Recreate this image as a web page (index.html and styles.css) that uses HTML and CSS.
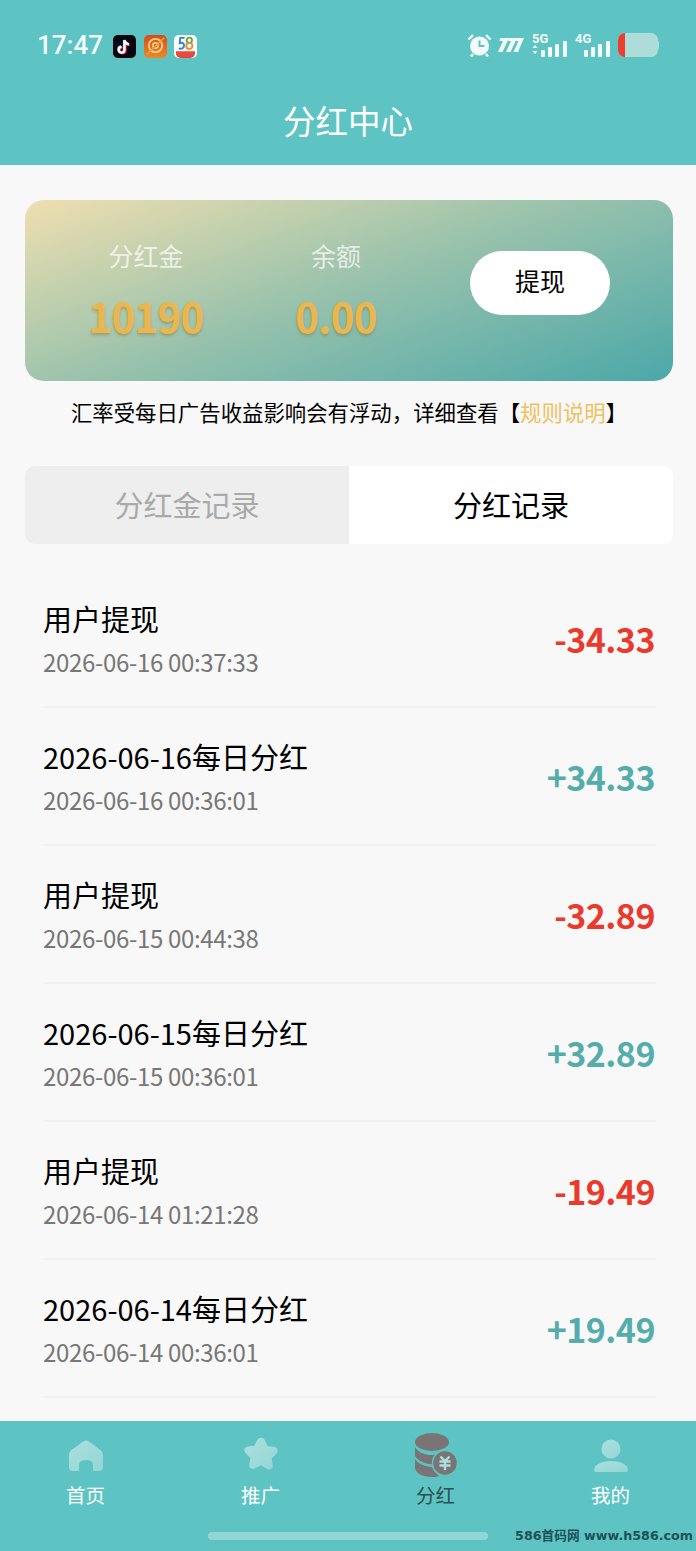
FILE: index.html
```html
<!DOCTYPE html>
<html lang="zh">
<head>
<meta charset="utf-8">
<title>分红中心</title>
<link rel="stylesheet" href="styles.css">
</head>
<body>
<div class="app">
  <header class="header">
    <div class="status">
      <span class="time">17:47</span>
      <div class="apps">
        <svg class="app-icon" viewBox="0 0 24 24"><rect width="24" height="24" rx="5" fill="#06060f"/><path d="M12 5.500v10a3 3 0 1 1-3-3M12 5.500c.4 2.600 2 4 4.500 4.300" fill="none" stroke="#ee1d52" stroke-width="2.600" transform="translate(1 .6)"/><path d="M12 5.500v10a3 3 0 1 1-3-3M12 5.500c.4 2.600 2 4 4.500 4.300" fill="none" stroke="#69c9d0" stroke-width="2.600" transform="translate(-.4 -.4)"/><path d="M12 5.500v10a3 3 0 1 1-3-3M12 5.500c.4 2.600 2 4 4.500 4.300" fill="none" stroke="#fff" stroke-width="2.300"/></svg>
        <svg class="app-icon" viewBox="0 0 24 24"><defs><linearGradient id="orange" x1="0" y1="0" x2="0" y2="1"><stop offset="0" stop-color="#d84a20"/><stop offset="1" stop-color="#e98a28"/></linearGradient></defs><rect width="24" height="24" rx="5" fill="url(#orange)"/><circle cx="12" cy="11" r="7" fill="none" stroke="#f6cf86" stroke-width="2"/><circle cx="12" cy="11" r="2.800" fill="none" stroke="#f6cf86" stroke-width="1.600"/><path d="M3 20 21 3" stroke="#e8a33a" stroke-width="1.500"/></svg>
        <svg class="app-icon" viewBox="0 0 24 24"><rect width="24" height="24" rx="5" fill="#fbfbfb"/><path d="M2 17H22V19A5 5 0 0 1 17 24H7A5 5 0 0 1 2 19Z" fill="#e5493f"/><circle cx="16" cy="5.500" r="2.800" fill="none" stroke="#58ad3c" stroke-width="1.900"/><circle cx="16" cy="11.500" r="3.200" fill="none" stroke="#ef8d2c" stroke-width="1.900"/><path d="M11 3H6.500L6 8.500c2.500-1 4.500 0 4.500 2.500S8 15 5 14" fill="none" stroke="#2a83cf" stroke-width="1.900"/></svg>
      </div>
      <div class="indicators">
        <svg class="alarm" viewBox="0 0 25 24"><circle cx="12.500" cy="13" r="9.500" fill="#f2fbfa"/><path d="M12.500 7.500V13h5" fill="none" stroke="#5ec4c3" stroke-width="2"/><path d="M1.500 6.500 6 2M23.500 6.500 19 2M6 21l-2 2.500M19 21l2 2.500" stroke="#f2fbfa" stroke-width="2.400"/></svg>
        <svg class="hd" viewBox="0 0 27 14"><path d="M3 0h9L5.500 14H1L6 3H2.500ZM12 0H20L13.500 14H9L14 3H11ZM20 0H27L21 14H16.500L21.500 3H19Z" fill="#f2fbfa"/></svg>
        <div class="signal">
          <span class="net">5G</span>
          <svg class="bars" viewBox="0 0 36 16"><path d="M3 4 5.500 7H.5ZM3 13 .5 10h5Z" fill="#f2fbfa"/><rect x="9" y="9" width="4" height="7" rx="1" fill="#f2fbfa"/><rect x="16" y="6" width="4" height="10" rx="1" fill="#f2fbfa"/><rect x="23" y="3" width="4" height="13" rx="1" fill="#f2fbfa"/><rect x="31" y="0" width="4" height="16" rx="1" fill="#f2fbfa"/></svg>
        </div>
        <div class="signal signal-4g">
          <span class="net">4G</span>
          <svg class="bars" viewBox="0 0 36 16"><rect x="9" y="9" width="4" height="7" rx="1" fill="#f2fbfa"/><rect x="16" y="6" width="4" height="10" rx="1" fill="#f2fbfa"/><rect x="23" y="3" width="4" height="13" rx="1" fill="#f2fbfa"/><rect x="31" y="0" width="4" height="16" rx="1" fill="#f2fbfa"/></svg>
        </div>
        <svg class="battery" viewBox="0 0 41 24"><rect x="0" y="0" width="40" height="24" rx="7" fill="#aedcd9"/><rect x="39" y="8" width="2" height="8" rx="1" fill="#aedcd9"/><path d="M7 0V24A7 7 0 0 1 0 17V7A7 7 0 0 1 7 0Z" fill="#ee3d2f"/></svg>
      </div>
    </div>
    <h1 class="title">分红中心</h1>
  </header>

  <main class="content">
    <section class="card">
      <div class="stat stat-bonus">
        <span class="stat-label">分红金</span>
        <span class="stat-value">10190</span>
      </div>
      <div class="stat stat-balance">
        <span class="stat-label">余额</span>
        <span class="stat-value">0.00</span>
      </div>
      <button class="withdraw">提现</button>
    </section>

    <p class="note">汇率受每日广告收益影响会有浮动，详细查看【<span class="note-link">规则说明</span>】</p>

    <div class="tabs">
      <div class="tab tab-off">分红金记录</div>
      <div class="tab tab-on">分红记录</div>
    </div>

    <ul class="records">
      <li class="record"><div class="rec-main"><div class="rec-title">用户提现</div><div class="rec-time">2026-06-16 00:37:33</div></div><div class="amount minus">-34.33</div></li>
      <li class="record"><div class="rec-main"><div class="rec-title">2026-06-16每日分红</div><div class="rec-time">2026-06-16 00:36:01</div></div><div class="amount plus">+34.33</div></li>
      <li class="record"><div class="rec-main"><div class="rec-title">用户提现</div><div class="rec-time">2026-06-15 00:44:38</div></div><div class="amount minus">-32.89</div></li>
      <li class="record"><div class="rec-main"><div class="rec-title">2026-06-15每日分红</div><div class="rec-time">2026-06-15 00:36:01</div></div><div class="amount plus">+32.89</div></li>
      <li class="record"><div class="rec-main"><div class="rec-title">用户提现</div><div class="rec-time">2026-06-14 01:21:28</div></div><div class="amount minus">-19.49</div></li>
      <li class="record"><div class="rec-main"><div class="rec-title">2026-06-14每日分红</div><div class="rec-time">2026-06-14 00:36:01</div></div><div class="amount plus">+19.49</div></li>
    </ul>
  </main>

  <nav class="tabbar">
    <div class="nav-item">
      <svg class="nav-icon" viewBox="0 0 36 36"><defs><linearGradient id="g1" x1="0" y1="0" x2="1" y2="1"><stop offset="0" stop-color="#abe0de"/><stop offset="1" stop-color="#93d6d4"/></linearGradient></defs><path d="M14.500 5Q18 2 21.500 5L31 12Q35 14.500 35 18V30Q35 34 31 34H25V28Q25 23 18 23Q11 23 11 28V34H5Q1 34 1 30V18Q1 14.500 5 12Z" fill="url(#g1)"/></svg>
      <span class="nav-text">首页</span>
    </div>
    <div class="nav-item">
      <svg class="nav-icon" viewBox="2 1 32 32"><path d="M15.500 3.800c1-1.900 4-1.900 5 0l2.900 5.900 6.400 1c2.200.3 3 2.900 1.500 4.400l-4.600 4.500 1 6.500c.4 2.200-1.900 3.800-3.900 2.800L18 25.300l-5.800 3.100c-2 1-4.300-.6-3.900-2.800l1-6.500-4.600-4.500c-1.500-1.500-.7-4.100 1.500-4.400l6.400-1Z" fill="url(#g1)" stroke="url(#g1)" stroke-width="1.500" stroke-linejoin="round"/></svg>
      <span class="nav-text">推广</span>
    </div>
    <div class="nav-item nav-active">
      <svg class="nav-icon nav-icon-coin" viewBox="0 0 46 46"><ellipse cx="19" cy="9" rx="17" ry="9" fill="#7a7474"/><path d="M2 14C5 19.500 12 22 19 22L27 21 21 31.500C12 31 5 28 2 23Z" fill="#7a7474"/><path d="M2 26C5 31 12 33.500 19 34L21 38 26 43C24 44 21 44 19 44 9 44 2 40 2 34Z" fill="#7a7474"/><circle cx="32" cy="30" r="12.500" fill="#7a7474" stroke="#5ec4c3" stroke-width="1.500"/><path d="M27.500 23.500 32 28l4.500-4.500M26.500 28.500h11M26.500 32.500h11M32 28v9" fill="none" stroke="#aee0de" stroke-width="2.400"/></svg>
      <span class="nav-text">分红</span>
    </div>
    <div class="nav-item">
      <svg class="nav-icon" viewBox="0 0 36 36"><circle cx="18" cy="12" r="9.500" fill="url(#g1)"/><path d="M1 33C1 28 8 24 18 24S35 28 35 33Q35 35 33 35H3Q1 35 1 33Z" fill="url(#g1)"/></svg>
      <span class="nav-text">我的</span>
    </div>
    <div class="home-bar"></div>
    <div class="watermark">586首码网 www.h586.com</div>
  </nav>
</div>
</body>
</html>
```

FILE: styles.css
```css
* { box-sizing: border-box; margin: 0; padding: 0; }
html, body { height: 100%; }
body {
  font-family: "Noto Sans CJK SC", "Noto Sans", sans-serif;
  background: #f8f8f8;
  color: #000;
}
.app {
  width: 696px;
  height: 1551px;
  display: flex;
  flex-direction: column;
  overflow: hidden;
  position: relative;
}
.header {
  height: 165px;
  background: #5ec4c3;
  padding: 28px 37px 0 37px;
  flex: none;
}
.status {
  display: flex;
  align-items: center;
  height: 34px;
}
.time {
  font-family: "Roboto", "Noto Sans", sans-serif;
  font-size: 26px;
  font-weight: 500;
  color: #f2fbfa;
  line-height: 34px;
  width: 76px;
}
.apps { display: flex; gap: 7.500px; padding-top: 2px; }
.app-icon { width: 23px; height: 23px; display: block; }
.indicators {
  margin-left: auto;
  display: flex;
  align-items: center;
}
.alarm { width: 25px; height: 24px; display: block; }
.hd { width: 27px; height: 14px; margin-left: 5px; display: block; }
.signal {
  position: relative;
  width: 36px;
  height: 24px;
  margin-left: 8px;
}
.signal-4g { margin-left: 7px; }
.net {
  position: absolute;
  left: 0;
  top: -1px;
  font-family: "Roboto", sans-serif;
  font-size: 13px;
  font-weight: 700;
  line-height: 13px;
  color: #f2fbfa;
}
.bars { position: absolute; left: 0; bottom: 0; width: 36px; height: 16px; display: block; }
.battery { width: 41px; height: 24px; margin-left: 7px; display: block; }
.title {
  margin-top: 35px;
  font-size: 32.500px;
  font-weight: 400;
  line-height: 46px;
  text-align: center;
  color: #fff;
}
.content {
  flex: 1;
  padding: 35px 23px 0 25px;
  min-height: 0;
}
.card {
  height: 181px;
  border-radius: 19px;
  background: linear-gradient(160deg, #efdfb0 0%, #96c1ac 50%, #4ba8a8 100%);
  position: relative;
  display: flex;
  align-items: flex-start;
}
.stat {
  display: flex;
  flex-direction: column;
  align-items: center;
  padding-top: 37px;
  width: 160px;
}
.stat-bonus { margin-left: 41px; }
.stat-balance { margin-left: 30px; }
.stat-label {
  font-size: 25px;
  line-height: 36px;
  color: rgba(255, 255, 255, 0.72);
}
.stat-value {
  margin-top: 18px;
  font-size: 40px;
  font-weight: 700;
  line-height: 50px;
  letter-spacing: -0.600px;
  color: #eeb64a;
  text-shadow: 0 2px 3px rgba(120, 110, 60, 0.45);
}
.withdraw {
  position: absolute;
  left: 445px;
  top: 51px;
  width: 140px;
  height: 64px;
  border: 0;
  border-radius: 32px;
  background: #fff;
  padding-bottom: 6px;
  font-family: inherit;
  font-size: 25px;
  color: #000;
}
.note {
  margin-top: 15px;
  font-size: 21.400px;
  line-height: 32px;
  text-align: center;
  color: #000;
}
.note-link { color: #efc15e; }
.tabs {
  margin-top: 38px;
  display: flex;
  height: 78px;
  border-radius: 10px;
  overflow: hidden;
}
.tab {
  flex: 1;
  font-size: 29px;
  line-height: 76px;
  text-align: center;
}
.tab-off { background: #eeeeee; color: #a9a9a9; }
.tab-on { background: #fff; color: #000; }
.records {
  list-style: none;
  margin: 26px 17px 0 18px;
}
.record {
  height: 138px;
  display: flex;
  align-items: center;
  justify-content: space-between;
  border-bottom: 2px solid #f0f0f0;
}
.rec-title {
  font-size: 29px;
  line-height: 40px;
}
.rec-time {
  margin-top: 8px;
  font-size: 24px;
  line-height: 32px;
  letter-spacing: -0.330px;
  color: #777;
}
.amount {
  margin-top: 2px;
  margin-right: 1px;
  font-size: 34px;
  font-weight: 700;
  line-height: 46px;
  letter-spacing: -0.500px;
}
.minus { color: #ea3a2c; }
.plus { color: #55adab; }
.tabbar {
  position: absolute;
  left: 0;
  right: 0;
  bottom: 0;
  height: 130px;
  background: #5ec4c3;
  display: grid;
  grid-template-columns: repeat(4, 175px);
  justify-content: center;
  align-content: start;
  padding-top: 16px;
}
.nav-item {
  display: flex;
  flex-direction: column;
  align-items: center;
}
.nav-icon { width: 36px; height: 36px; display: block; }
.nav-icon-coin { width: 46px; height: 46px; margin-top: -4px; margin-bottom: -6px; }
.nav-text {
  margin-top: 7px;
  font-size: 19.500px;
  line-height: 30px;
  color: #fff;
}
.nav-active .nav-text { color: #2d4f52; }
.home-bar {
  position: absolute;
  left: 208px;
  top: 111px;
  width: 280px;
  height: 8px;
  border-radius: 4px;
  background: #93d6d5;
}
.watermark {
  position: absolute;
  right: 3px;
  top: 105px;
  font-family: "DejaVu Sans", "Noto Sans CJK SC", sans-serif;
  font-size: 12.700px;
  font-weight: 700;
  line-height: 20px;
  color: #1f5056;
  white-space: nowrap;
}
```
